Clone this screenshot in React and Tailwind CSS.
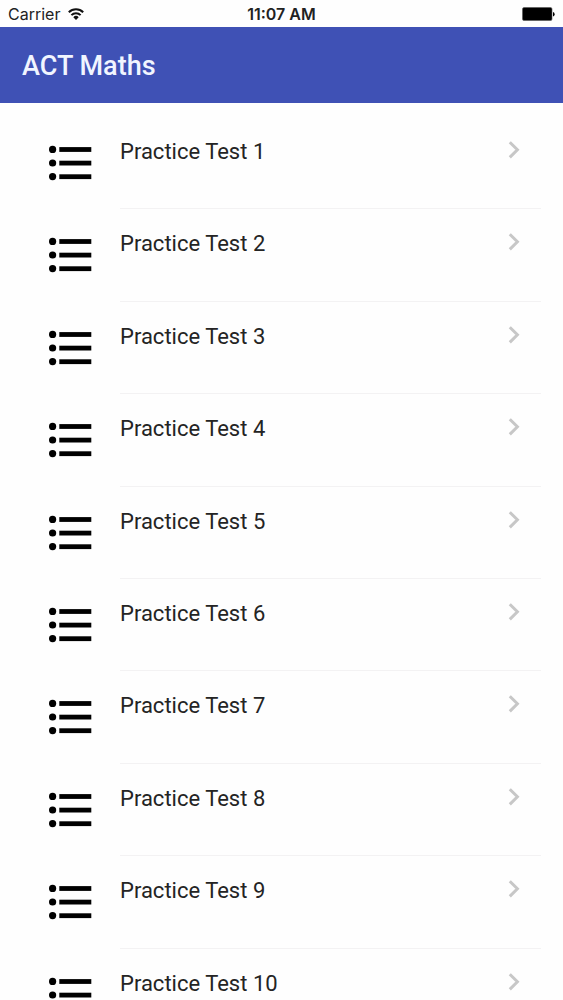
const tests = Array.from({ length: 10 }, (_, index) => ({
  id: index + 1,
  title: `Practice Test ${index + 1}`,
}))

export default function App() {
  return (
    <div className="h-screen flex flex-col bg-[#fefefe] font-['Roboto',sans-serif]">
      <StatusBar />
      <header className="shrink-0 flex items-center h-[76px] px-[22px] pt-0.5 bg-[#3f51b5]">
        <h1 className="text-[27px] leading-8 font-medium text-[#f1f5ff]">ACT Maths</h1>
      </header>
      <main className="flex-1 min-h-0 overflow-y-auto [scrollbar-width:none] pt-[14px]">
        <ul className="grid auto-rows-fr min-h-[924px]">
          {tests.map((test) => (
            <TestRow key={test.id} test={test} />
          ))}
        </ul>
      </main>
    </div>
  )
}

function StatusBar() {
  return (
    <div className="shrink-0 grid grid-cols-[1fr_auto_1fr] items-center h-[27px] px-2 font-['Inter',sans-serif] text-base text-[#222]">
      <div className="flex items-center gap-2">
        <span>Carrier</span>
        <WifiIcon />
      </div>
      <time className="text-center font-semibold">11:07 AM</time>
      <div className="flex justify-end">
        <BatteryIcon />
      </div>
    </div>
  )
}

function TestRow({ test }) {
  return (
    <li className="flex">
      <a href={`#test-${test.id}`} className="flex flex-1 items-start pl-12 pr-[22px]">
        <ListIcon />
        <span className="flex flex-1 justify-between self-stretch ml-7 pt-[21px] pr-[21px] border-b border-[#f3f2f3]">
          <span className="text-[22px] leading-7 text-[#242424]">{test.title}</span>
          <ChevronIcon />
        </span>
      </a>
    </li>
  )
}

function ListIcon() {
  return (
    <svg className="shrink-0 mt-7 w-11 h-9" viewBox="0 0 44 36" fill="black" aria-hidden="true">
      <circle cx="4.6" cy="4.4" r="3.6" />
      <circle cx="4.6" cy="18" r="3.6" />
      <circle cx="4.6" cy="31.6" r="3.6" />
      <rect x="11.3" y="2.1" width="32" height="4.8" />
      <rect x="11.3" y="15.7" width="32" height="4.8" />
      <rect x="11.3" y="29.3" width="32" height="4.8" />
    </svg>
  )
}

function ChevronIcon() {
  return (
    <svg className="mt-0.5 w-3 h-5" viewBox="0 0 12 20" fill="none" stroke="#c7c7c7" strokeWidth="3" aria-hidden="true">
      <path d="M1.8 2.2 9.4 9.8 1.8 17.4" />
    </svg>
  )
}

function WifiIcon() {
  return (
    <svg className="w-4 h-3" viewBox="0 0 16 12" fill="none" stroke="#111" strokeWidth="2" aria-hidden="true">
      <path d="M.8 4.3a10.2 10.2 0 0 1 14.4 0" />
      <path d="M3.4 7.1a6.5 6.5 0 0 1 9.2 0" />
      <path d="M8 12 5.3 9.2a3.8 3.8 0 0 1 5.4 0Z" fill="#111" stroke="none" />
    </svg>
  )
}

function BatteryIcon() {
  return (
    <svg className="w-[33px] h-[14px]" viewBox="0 0 33 14" aria-hidden="true">
      <rect x=".5" y=".5" width="29.5" height="13" rx="1.5" fill="black" stroke="#555" strokeWidth=".6" />
      <path d="M31 5a2.3 2.3 0 0 1 0 4.4Z" fill="black" />
    </svg>
  )
}
